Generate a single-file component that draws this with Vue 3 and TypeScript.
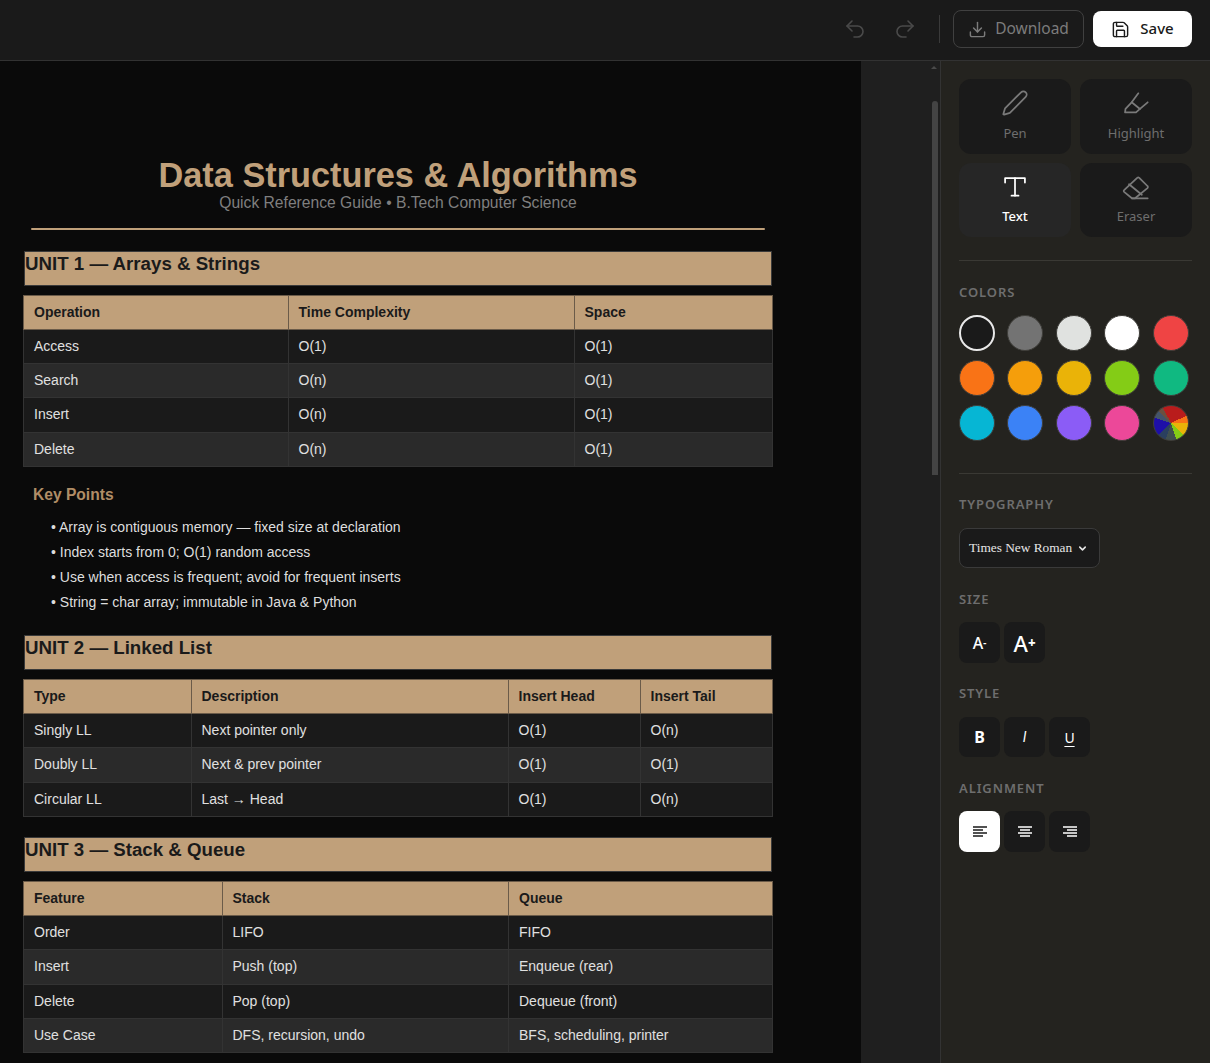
<script setup lang="ts">
import { ref } from 'vue'

interface DocTable {
  widths: number[]
  head: string[]
  rows: string[][]
}

interface DocUnit {
  title: string
  table: DocTable
  points?: string[]
}

const units: DocUnit[] = [
  {
    title: 'UNIT 1 — Arrays & Strings',
    table: {
      widths: [264.5, 286, 198.5],
      head: ['Operation', 'Time Complexity', 'Space'],
      rows: [
        ['Access', 'O(1)', 'O(1)'],
        ['Search', 'O(n)', 'O(1)'],
        ['Insert', 'O(n)', 'O(1)'],
        ['Delete', 'O(n)', 'O(1)'],
      ],
    },
    points: [
      'Array is contiguous memory — fixed size at declaration',
      'Index starts from 0; O(1) random access',
      'Use when access is frequent; avoid for frequent inserts',
      'String = char array; immutable in Java & Python',
    ],
  },
  {
    title: 'UNIT 2 — Linked List',
    table: {
      widths: [167.5, 317, 132, 132.5],
      head: ['Type', 'Description', 'Insert Head', 'Insert Tail'],
      rows: [
        ['Singly LL', 'Next pointer only', 'O(1)', 'O(n)'],
        ['Doubly LL', 'Next & prev pointer', 'O(1)', 'O(1)'],
        ['Circular LL', 'Last → Head', 'O(1)', 'O(n)'],
      ],
    },
  },
  {
    title: 'UNIT 3 — Stack & Queue',
    table: {
      widths: [198.5, 286.5, 264],
      head: ['Feature', 'Stack', 'Queue'],
      rows: [
        ['Order', 'LIFO', 'FIFO'],
        ['Insert', 'Push (top)', 'Enqueue (rear)'],
        ['Delete', 'Pop (top)', 'Dequeue (front)'],
        ['Use Case', 'DFS, recursion, undo', 'BFS, scheduling, printer'],
      ],
    },
  },
]

const colors = [
  '#1a1a1a', '#737373', '#e0e2e0', '#ffffff', '#ef4444',
  '#f97316', '#f59e0b', '#eab308', '#84cc16', '#10b981',
  '#06b6d4', '#3b82f6', '#8b5cf6', '#ec4899',
]

const activeColor = ref('#1a1a1a')
const activeAlign = ref('left')
const activeTool = ref('text')
</script>

<template>
  <div class="editor">
    <header class="topbar">
      <button class="icon-btn" aria-label="Undo">
        <svg viewBox="0 0 24 24"><path d="M9 14 4 9l5-5" /><path d="M4 9h10.5a5.5 5.5 0 0 1 0 11H11" /></svg>
      </button>
      <button class="icon-btn" aria-label="Redo">
        <svg viewBox="0 0 24 24"><path d="m15 14 5-5-5-5" /><path d="M20 9H9.5a5.5 5.5 0 0 0 0 11H13" /></svg>
      </button>
      <span class="bar-sep"></span>
      <button class="download">
        <svg viewBox="0 0 24 24"><path d="M12 15V3" /><path d="M21 15v4a2 2 0 0 1-2 2H5a2 2 0 0 1-2-2v-4" /><path d="m7 10 5 5 5-5" /></svg>
        <span class="btn-text">Download</span>
      </button>
      <button class="save">
        <svg viewBox="0 0 24 24"><path d="M15.2 3a2 2 0 0 1 1.4.6l3.8 3.8a2 2 0 0 1 .6 1.4V19a2 2 0 0 1-2 2H5a2 2 0 0 1-2-2V5a2 2 0 0 1 2-2z" /><path d="M17 21v-7a1 1 0 0 0-1-1H8a1 1 0 0 0-1 1v7" /><path d="M7 3v4a1 1 0 0 0 1 1h7" /></svg>
        <span class="btn-text">Save</span>
      </button>
    </header>

    <div class="workspace">
      <main class="canvas">
        <article class="page">
          <div class="doc">
            <h1 class="doc-title">Data Structures &amp; Algorithms</h1>
            <p class="doc-sub">Quick Reference Guide • B.Tech Computer Science</p>
            <hr class="doc-rule" />

            <section v-for="unit in units" :key="unit.title" class="unit">
              <h2 class="unit-title">{{ unit.title }}</h2>
              <table class="doc-table">
                <colgroup>
                  <col v-for="(w, i) in unit.table.widths" :key="i" :style="{ width: w + 'px' }" />
                </colgroup>
                <thead>
                  <tr>
                    <th v-for="h in unit.table.head" :key="h">{{ h }}</th>
                  </tr>
                </thead>
                <tbody>
                  <tr v-for="row in unit.table.rows" :key="row[0]">
                    <td v-for="(cell, i) in row" :key="i">{{ cell }}</td>
                  </tr>
                </tbody>
              </table>
              <template v-if="unit.points">
                <h3 class="points-title">Key Points</h3>
                <ul class="points">
                  <li v-for="p in unit.points" :key="p">• {{ p }}</li>
                </ul>
              </template>
            </section>
          </div>
        </article>
        <div class="scroll-track">
          <span class="scroll-up"></span>
          <span class="scroll-thumb"></span>
        </div>
      </main>

      <aside class="sidebar">
        <div class="tools">
          <button class="tool" :class="{ active: activeTool === 'pen' }">
            <svg viewBox="0 0 24 24"><path d="M21.174 6.812a1 1 0 0 0-3.986-3.987L3.842 16.174a2 2 0 0 0-.5.83l-1.321 4.352a.5.5 0 0 0 .623.622l4.353-1.32a2 2 0 0 0 .83-.497z" /></svg>
            <span>Pen</span>
          </button>
          <button class="tool" :class="{ active: activeTool === 'highlight' }">
            <svg viewBox="0 0 24 24"><path d="M14 3.700 8.300 11.400 3 17.100 2.600 20H12l3.400-2.900L22 11.400" /><path d="M8.300 11.400l7.100 5.700" /></svg>
            <span>Highlight</span>
          </button>
          <button class="tool" :class="{ active: activeTool === 'text' }">
            <svg viewBox="0 0 24 24"><path d="M3.500 9V5.300h17V9" /><path d="M12 5.300v15" /><path d="M9 20.300h6" /></svg>
            <span>Text</span>
          </button>
          <button class="tool" :class="{ active: activeTool === 'eraser' }">
            <svg viewBox="0 0 24 24"><path d="M1.800 15.500 13 5a1.500 1.500 0 0 1 1.800 0L21.800 12a1.200 1.200 0 0 1 0 1.800L11.200 22.500H8.500L1.800 17a1 1 0 0 1 0-1.500z" /><path d="M8.500 22.500H22" /><path d="m6 10.500 11 9" /></svg>
            <span>Eraser</span>
          </button>
        </div>

        <div class="divider"></div>

        <h4 class="label colors-label">COLORS</h4>
        <div class="swatches">
          <button
            v-for="c in colors"
            :key="c"
            class="swatch"
            :class="{ selected: c === activeColor }"
            :style="{ background: c }"
          ></button>
          <button class="swatch rainbow"></button>
        </div>

        <div class="divider lower"></div>

        <h4 class="label">TYPOGRAPHY</h4>
        <button class="font-select">
          Times New Roman
          <svg viewBox="0 0 24 24"><path d="m6 9 6 6 6-6" /></svg>
        </button>

        <h4 class="label">SIZE</h4>
        <div class="btn-row">
          <button class="square size-down">A<small>-</small></button>
          <button class="square size-up">A<small>+</small></button>
        </div>

        <h4 class="label">STYLE</h4>
        <div class="btn-row style-row">
          <button class="square bold">B</button>
          <button class="square italic">I</button>
          <button class="square underline">U</button>
        </div>

        <h4 class="label">ALIGNMENT</h4>
        <div class="btn-row">
          <button class="square" :class="{ on: activeAlign === 'left' }">
            <svg viewBox="0 0 14 11"><path d="M0 1h14M0 4h10M0 7h14M0 10h10" /></svg>
          </button>
          <button class="square" :class="{ on: activeAlign === 'center' }">
            <svg viewBox="0 0 14 11"><path d="M0 1h14M2 4h10M0 7h14M2 10h10" /></svg>
          </button>
          <button class="square" :class="{ on: activeAlign === 'right' }">
            <svg viewBox="0 0 14 11"><path d="M0 1h14M4 4h10M0 7h14M4 10h10" /></svg>
          </button>
        </div>
      </aside>
    </div>
  </div>
</template>

<style>
html,
body {
  margin: 0;
  background: #1a1a1a;
}
</style>

<style scoped>
.editor {
  width: 1210px;
  height: 1063px;
  overflow: hidden;
  display: flex;
  flex-direction: column;
  font-family: 'Noto Sans', sans-serif;
  background: #1a1a1a;
}

button {
  font-family: inherit;
  border: none;
  cursor: pointer;
}

svg {
  fill: none;
  stroke: currentColor;
  stroke-width: 2;
  stroke-linecap: round;
  stroke-linejoin: round;
}

.topbar {
  height: 58px;
  padding: 0 18px 2px 0;
  flex: none;
  box-sizing: content-box;
  display: flex;
  align-items: center;
  justify-content: flex-end;
  background: #1a1a1a;
  border-bottom: 1px solid #323232;
}

.icon-btn {
  width: 36px;
  height: 36px;
  margin-right: 14px;
  padding: 6px;
  background: none;
  color: #4a4a4a;
}

.icon-btn svg {
  width: 24px;
  height: 24px;
  stroke-width: 1.6;
}

.bar-sep {
  width: 1px;
  height: 28px;
  margin: 0 13px 0 2px;
  background: #3a3a3a;
}

.download {
  width: 131px;
  height: 38px;
  margin-right: 9px;
  display: flex;
  align-items: center;
  justify-content: center;
  gap: 8px;
  font-size: 15.5px;
  background: none;
  color: #7c7c7c;
  border: 1px solid #404040;
  border-radius: 8px;
}

.btn-text {
  margin-bottom: 2px;
}

.download svg,
.save svg {
  width: 19px;
  height: 19px;
  stroke-width: 1.8;
}

.save {
  width: 99px;
  height: 36px;
  display: flex;
  align-items: center;
  justify-content: center;
  gap: 10px;
  font-size: 15px;
  font-weight: 500;
  background: #fff;
  color: #1a1a1a;
  border-radius: 8px;
}

.workspace {
  flex: 1;
  min-height: 0;
  display: flex;
}

.canvas {
  width: 940px;
  flex: none;
  display: flex;
  overflow: hidden;
  background: #1f1f1f;
  border-right: 1px solid #333;
}

.page {
  width: 861px;
  flex: none;
  background: #0a0a0a;
  font-family: 'Liberation Sans', Arial, sans-serif;
}

.doc {
  width: 750px;
  margin-left: 23px;
  padding-top: 94px;
}

.doc-title {
  margin: 0;
  text-align: center;
  font-size: 34.3px;
  line-height: 40px;
  font-weight: 700;
  color: #c0a07a;
}

.doc-sub {
  margin: 1px 0 0;
  text-align: center;
  font-size: 15.65px;
  line-height: 14px;
  color: #7f7f7f;
}

.doc-rule {
  width: 734px;
  height: 2px;
  margin: 18px 0 21px 8px;
  border: none;
  border-radius: 1px;
  background: #c0a07a;
}

.unit-title {
  box-sizing: border-box;
  width: 748px;
  height: 35px;
  margin: 0 0 8.5px 1px;
  font-size: 18.7px;
  line-height: 24px;
  font-weight: 700;
  color: #1a1a1a;
  background: #c0a07a;
  border: 1px solid #3a3a3a;
}

.doc-table {
  width: 749px;
  table-layout: fixed;
  border-collapse: collapse;
  font-size: 14px;
}

.doc-table th,
.doc-table td {
  height: 34.25px;
  padding: 0 10px 1px;
  text-align: left;
  box-sizing: border-box;
  border: 1px solid #333;
}

.doc-table th {
  font-weight: 700;
  color: #1a1a1a;
  background: #c0a07a;
  border-color: #6b5b49;
}

.doc-table td {
  color: #e0e0e0;
}

.doc-table tbody tr:nth-child(odd) {
  background: #1a1a1a;
}

.doc-table tbody tr:nth-child(even) {
  background: #2a2a2a;
}

.points-title {
  margin: 18px 0 0 10px;
  font-size: 15.6px;
  line-height: 20px;
  font-weight: 700;
  color: #b08d66;
}

.points {
  list-style: none;
  margin: 10px 0 0;
  padding: 0 0 0 28px;
  font-size: 14px;
  line-height: 25px;
  color: #dedede;
}

.unit + .unit {
  margin-top: 20.5px;
}

.scroll-track {
  flex: 1;
  position: relative;
}

.scroll-up {
  position: absolute;
  top: 5px;
  left: 70px;
  border-left: 3px solid transparent;
  border-right: 3px solid transparent;
  border-bottom: 3px solid #4a4a4a;
}

.scroll-thumb {
  position: absolute;
  top: 40px;
  left: 71px;
  width: 6px;
  height: 374px;
  border-radius: 3px 3px 0 0;
  background: #444;
}

.sidebar {
  flex: 1;
  padding: 18px 18px 0;
  background: #24231f;
}

.tools {
  display: grid;
  grid-template-columns: 112px 112px;
  gap: 9px;
}

.tool {
  height: 75px;
  padding: 10px 0 0;
  display: flex;
  flex-direction: column;
  align-items: center;
  font-size: 13px;
  line-height: 18px;
  color: #6e6e6e;
  background: #1a1a1a;
  border-radius: 12px;
}

.tool:nth-child(n + 3) {
  height: 74px;
  padding-top: 9px;
}

.tool svg {
  width: 28px;
  height: 28px;
  margin-bottom: 7px;
  stroke-width: 1.5;
  color: #7a7a7a;
}

.tool.active {
  color: #fff;
  background: #262626;
  font-weight: 500;
}

.tool.active svg {
  color: #fff;
}

.divider {
  height: 1px;
  margin-top: 23px;
  background: #3a3934;
}

.label {
  margin: 0 0 15px;
  font-size: 13px;
  line-height: 16px;
  font-weight: 600;
  letter-spacing: 0.9px;
  color: #6e6e6e;
}

.colors-label {
  margin-top: 23px;
}

.swatches {
  display: grid;
  grid-template-columns: repeat(5, 36px);
  column-gap: 12.4px;
  row-gap: 9px;
}

.swatch {
  width: 36px;
  height: 36px;
  padding: 0;
  box-sizing: border-box;
  border-radius: 50%;
  border: 1px solid #3f3e3a;
}

.swatch.selected {
  border: 2px solid #e8e8e8;
}

.rainbow {
  background: conic-gradient(#b91c1c 0 18%, #f97316 18% 25%, #eab308 25% 37%, #84cc16 37% 45%, #3f4f4f 45% 55%, #2a3f5f 55% 63%, #1e0fa8 63% 80%, #44546a 80% 87%, #6b5040 87% 92%, #b91c1c 92%);
}

.divider.lower {
  margin-top: 32px;
}

.divider.lower + .label {
  margin-top: 22px;
}

.font-select {
  width: 141px;
  height: 40px;
  margin: 16px 0 23px;
  padding: 0 0 0 9px;
  display: flex;
  align-items: center;
  gap: 5px;
  font-family: 'Liberation Serif', 'Times New Roman', serif;
  font-size: 13.33px;
  color: #e6e6e6;
  background: #1a1a1a;
  border: 1px solid #3a3a3a;
  border-radius: 8px;
}

.font-select svg {
  width: 11px;
  height: 11px;
  stroke-width: 3.4;
}

.btn-row {
  display: flex;
  gap: 4px;
  margin-bottom: 22px;
}

.style-row {
  margin: 16px 0 23px;
}

.style-row .square {
  height: 40px;
}

.square {
  width: 41px;
  height: 41px;
  padding: 0;
  display: flex;
  align-items: center;
  justify-content: center;
  color: #fff;
  background: #1a1a1a;
  border-radius: 8px;
}

.square svg {
  width: 14px;
  height: 11px;
  stroke-width: 1.3;
  stroke-linecap: butt;
}

.square.on {
  background: #fff;
  color: #1a1a1a;
}

.size-down {
  font-size: 16px;
  font-weight: 500;
}

.size-up {
  font-size: 22px;
  font-weight: 500;
}

.square small {
  font-size: 0.6em;
  font-weight: 800;
}

.bold {
  font-size: 16px;
  font-weight: 700;
}

.italic {
  font-family: Roboto, sans-serif;
  font-size: 14px;
  font-style: italic;
}

.underline {
  font-size: 14px;
  text-decoration: underline;
  text-underline-offset: 3px;
}
</style>
